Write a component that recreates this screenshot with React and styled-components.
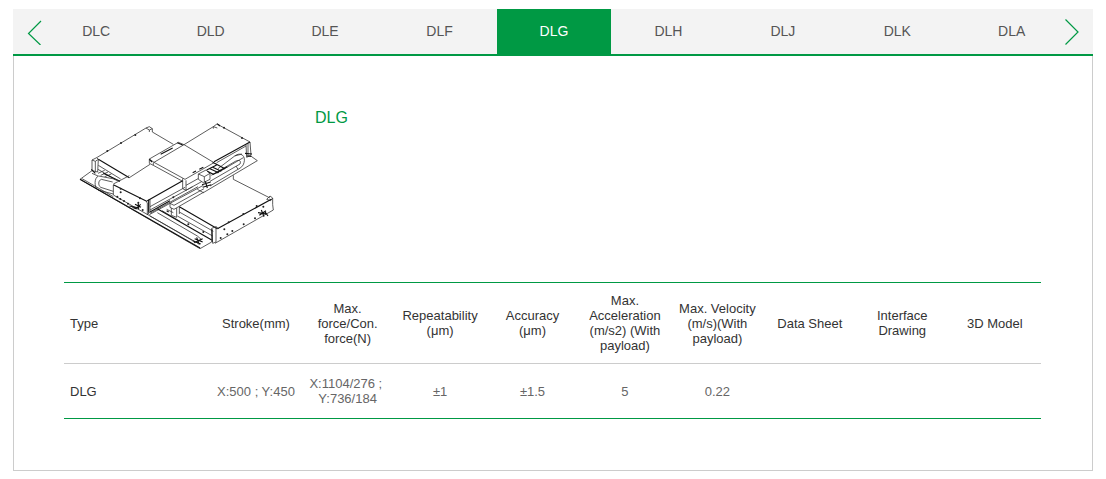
import React, { useState } from 'react'
import styled, { createGlobalStyle } from 'styled-components'

const series = ['DLC', 'DLD', 'DLE', 'DLF', 'DLG', 'DLH', 'DLJ', 'DLK', 'DLA']

const columns = [
    'Type',
    'Stroke(mm)',
    'Max. force/Con. force(N)',
    'Repeatability (μm)',
    'Accuracy (μm)',
    'Max. Acceleration (m/s2) (With payload)',
    'Max. Velocity (m/s)(With payload)',
    'Data Sheet',
    'Interface Drawing',
    '3D Model',
]

const rows = [
    ['DLG', 'X:500 ; Y:450', 'X:1104/276 ;\u00a0 Y:736/184', '±1', '±1.5', '5', '0.22', '', '', ''],
]

const screws = [
    [112, 123], [153, 99], [196, 75], [462, 53], [516, 84],
    [152, 236], [152, 247], [142, 260], [151, 267], [162, 273], [174, 281], [210, 265], [205, 278], [218, 300],
    [476, 337], [520, 312], [560, 288], [580, 290], [463, 358], [452, 384], [472, 373], [487, 363], [521, 343], [555, 325],
    [355, 343], [400, 366], [310, 262],
]

// line drawing of the crossed XY stage
const StageDrawing = () => (
    <Drawing viewBox="0 0 630 450" role="img" aria-label="DLG stage">
        {/* rear left axis */}
        <path d="M66 150L80 143L85 148L83 186L66 182ZM66 150L76 154L85 148M76 154V184M80 143L228 54L238 50L247 56V66L310 103M228 54L238 60L247 56M238 60V66" />
        <path d="M85 166L152 207M84 178L140 211M178 203L240 163M66 182L30 208M66 190L84 198M84 190L104 181M92 196L114 186M104 200L124 192" />
        <path className="bold" d="M85 148L178 203M64 178L76 190M100 190L150 214" />
        <path d="M130 252L84 240C72 232 72 202 86 198L128 206L150 214M130 244L92 232C84 226 84 212 94 208L128 216" />
        {/* carriage */}
        <path d="M238 147L325 97L342 104L252 157ZM238 147V160L250 166V157M252 157L345 208L432 158L342 104M250 166L338 214M338 205V236L348 241V211M348 226L386 205M348 241L400 212" />
        <path className="bold" d="M272 133L308 114M368 188L378 183M388 178L400 172M322 98L338 105M238 148L246 156" />
        {/* rear right axis */}
        <path d="M342 104L430 50L442 41L450 47L540 96L543 135L530 142L528 104M430 50L442 54M534 100V138M528 108L440 158" />
        <path className="bold" d="M540 96L432 155M525 130L546 132M530 138L545 139M442 42L450 48" />
        <path d="M545 140L562 152L400 248L382 238M490 196V208L600 264M430 50V56" />
        <path d="M444 176L494 138C512 124 528 138 522 158C520 168 512 174 504 178L420 228M424 196L496 154C508 148 514 152 510 162L420 214M494 138L516 132M504 178L498 168M440 190L520 143" />
        <path fill="#fff" d="M385 192L408 180L420 190V208L400 218L385 208ZM385 192L403 200L420 190M403 200V217" />
        <path className="bold" d="M410 180L440 165M412 184L430 193L472 170M420 176L446 188M428 172L454 184M428 157L465 176M396 224L422 216M398 232L424 224M406 214L412 234" />
        {/* front left axis */}
        <path d="M130 222L178 197M130 225V255L235 315M228 275L240 268V305L232 315V278ZM240 290L345 232M240 300L368 230M240 310L384 230" />
        <path className="bold" d="M130 224L230 274M232 272L338 212M236 270V308M240 306L300 272" />
        <path d="M30 208L390 416L425 396M36 206L130 260M235 315L384 400" />
        <path className="bold" d="M30 208L390 414" />
        <path className="bold" d="M195 283L213 292M198 295L212 283M205 280V298M186 292L200 297M178 288L208 294" />
        {/* lower rails */}
        <path d="M238 314L300 280L400 226M300 280V292L312 298L402 246M300 280L312 286L402 236M304 294V316L320 322V294M328 290V312M322 318L428 378M328 306L430 364M262 308L382 378L396 390M240 318L368 392M290 298L310 308M276 302L330 334" />
        <path className="bold" d="M262 296L425 390M328 290L442 356M368 392L392 402M374 386L398 396M372 398L398 386M380 382L388 404M290 302L296 306" />
        {/* lower right axis */}
        <path d="M590 268L600 258L608 264V284L610 300L435 400M590 268L602 272L608 264M425 355L438 350V396L428 400ZM438 350L446 356" />
        <path className="bold" d="M442 356L604 268M426 358V396M564 308L590 312M568 316L588 302M574 300L582 320M584 304L594 318" />
        <g className="holes">
            {screws.map(([x, y]) => <circle key={`${x}-${y}`} cx={x} cy={y} r="3" />)}
        </g>
    </Drawing>
)

const App = () => {
    const [active, setActive] = useState('DLG')
    const step = (by) => setActive(series[(series.indexOf(active) + by + series.length) % series.length])

    return (
        <Page>
            <GlobalStyle />
            <TabBar aria-label="Product series">
                <Arrow $side="left" type="button" aria-label="Previous" onClick={() => step(-1)}>
                    <svg width="16" height="26" viewBox="0 0 16 26"><path d="M15 2L2.5 14.5L14.5 26" /></svg>
                </Arrow>
                {series.map(name => (
                    <Tab key={name} href={`#${name}`} $active={name === active} onClick={() => setActive(name)}>{name}</Tab>
                ))}
                <Arrow $side="right" type="button" aria-label="Next" onClick={() => step(1)}>
                    <svg width="16" height="26" viewBox="0 0 16 26"><path d="M1.5 0.5L14 13L1.5 25.5" /></svg>
                </Arrow>
            </TabBar>
            <Panel>
                <Product>
                    <StageDrawing />
                    <Title>DLG</Title>
                </Product>
                <Specs>
                    <colgroup>
                        <TypeCol />
                        <StrokeCol />
                    </colgroup>
                    <thead>
                        <tr>{columns.map(column => <HeadCell key={column} scope="col">{column}</HeadCell>)}</tr>
                    </thead>
                    <tbody>
                        {rows.map(row => (
                            <tr key={row[0]}>{row.map((value, i) => <Cell key={columns[i]}>{value}</Cell>)}</tr>
                        ))}
                    </tbody>
                </Specs>
            </Panel>
        </Page>
    )
}


export default App;


const GlobalStyle = createGlobalStyle`
  * {
      box-sizing:border-box;
  }
  body {
      margin:0;
      background:#fff;
      color:#333;
      font-family:Arial, "Liberation Sans", sans-serif;
  }
`
const Page = styled.main`
  padding:9px 13px 8px;
`
const TabBar = styled.nav`
  position:relative;
  display:flex;
  padding:0 24px 0 26px;
  background:#f3f3f3;
  border-bottom:2px solid #009944;
`
const Tab = styled.a`
  flex:1;
  color:${props => props.$active ? '#fff' : '#555'};
  background:${props => props.$active ? '#009944' : 'transparent'};
  font-size:14px;
  line-height:45px;
  text-align:center;
  text-decoration:none;
`
const Arrow = styled.button`
  position:absolute;
  top:10px;
  ${props => props.$side}:13px;
  display:flex;
  padding:0;
  border:0;
  background:none;
  cursor:pointer;

  path {
      fill:none;
      stroke:#009944;
      stroke-width:1.2;
  }
`
const Panel = styled.section`
  padding:54px 51px 51px 50px;
  border:1px solid #ccc;
  border-top:0;
`
const Product = styled.div`
  display:flex;
  gap:35px;
  margin-bottom:22px;
  padding-left:6px;
`
const Drawing = styled.svg`
  flex:none;
  width:210px;
  height:150px;
  fill:none;
  stroke:#333;
  stroke-width:2.4;

  .bold {
      stroke:#111;
      stroke-width:3.4;
  }
  .holes {
      fill:#222;
      stroke:none;
  }
`
const Title = styled.h1`
  margin:0;
  color:#009944;
  font-size:16px;
  font-weight:normal;
  line-height:16px;
`
const Specs = styled.table`
  width:100%;
  table-layout:fixed;
  border-collapse:separate;
  border-spacing:0;
  border-top:1px solid #009944;
  border-bottom:1px solid #009944;
  font-size:13px;
  line-height:15px;
  text-align:center;
`
const TypeCol = styled.col`
  width:15%;
`
const StrokeCol = styled.col`
  width:9.3%;
`
const HeadCell = styled.th`
  padding:10px 5px;
  border-bottom:1px solid #ccc;
  font-weight:normal;

  &:first-child {
      padding-left:6px;
      text-align:left;
  }
`
const Cell = styled.td`
  padding:12px 5px;
  color:#666;

  &:first-child {
      padding-left:6px;
      color:#333;
      text-align:left;
  }
`
